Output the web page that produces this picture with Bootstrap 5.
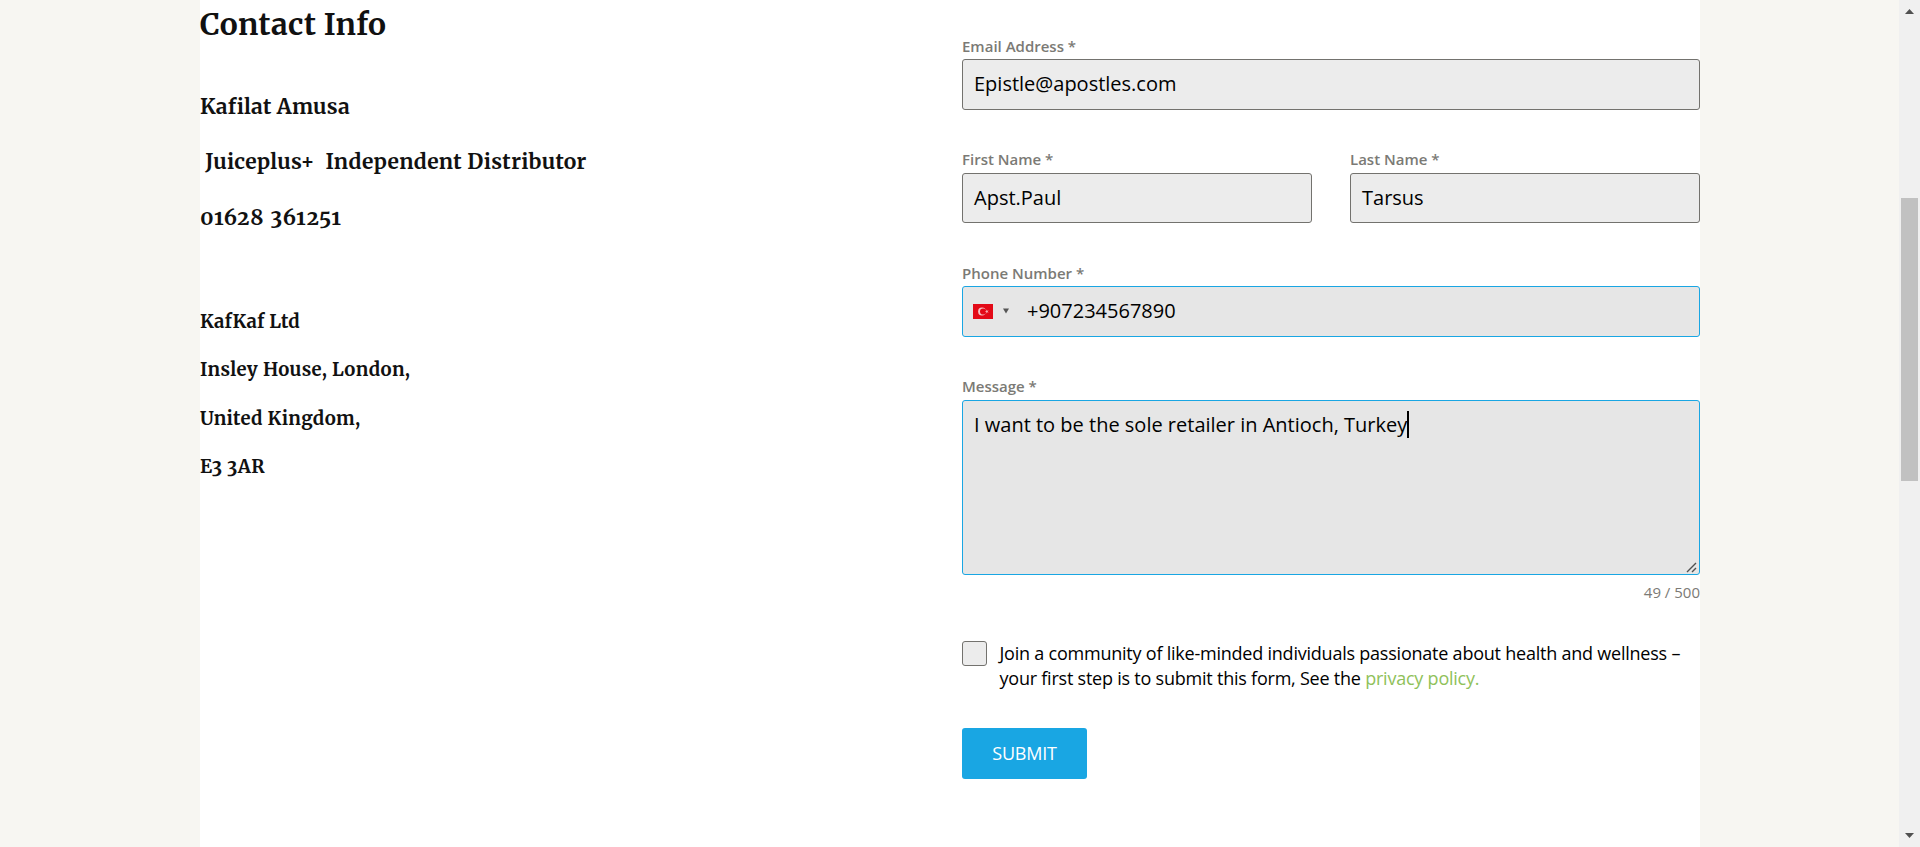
<!DOCTYPE html>
<html lang="en">
<head>
<meta charset="utf-8">
<title>Contact Info</title>
<link href="https://cdn.jsdelivr.net/npm/bootstrap@5.3.0/dist/css/bootstrap.min.css" rel="stylesheet">
<style>
body{background:#f7f6f2;font-family:"Open Sans",sans-serif;color:#000;height:847px;overflow:hidden}
.page{width:1500px;margin-left:200px;background:#fff}
.info{width:762px;font-family:Merriweather,"DejaVu Serif Condensed","DejaVu Serif",serif;font-weight:700;color:#111;white-space:pre;font-variant-numeric:oldstyle-nums}
.info h2,.info h4,.info h5{font-weight:inherit;margin:0}
.info h2{font-size:30px;line-height:48px;letter-spacing:.36px}
.info h4{font-size:21px;line-height:32px;margin-bottom:23px;letter-spacing:.25px}
.info .role{letter-spacing:.34px;margin-bottom:24px}
.info .tel{letter-spacing:.97px}
.info h5{font-size:18.5px;line-height:30px;margin-bottom:18.5px;letter-spacing:.36px}
.info .firm{margin-top:72.5px;letter-spacing:.2px}
.entry{width:738px;padding-top:33px}
.field{margin-bottom:37px}
.field label{display:block;font-size:15px;font-weight:600;line-height:26px;color:#7b7a75}
.field .raised{line-height:24px;padding-bottom:2px}
.field .form-control{height:51px;padding:0 11px;border:1px solid #73726e;border-radius:3px;background:#ececec;font-size:20px;line-height:48px;color:#000}
.field .short{height:50px}
.field .filled{border-color:#19a6e3;background:#e6e6e6}
.field .phone{padding:0 10px 1px}
.field .area{height:175px;position:relative;line-height:27px;padding-top:10px;margin-bottom:0}
.caret{width:2px;height:27px;background:#000}
.grip{position:absolute;right:2px;bottom:1px}
.counter{font-size:15px;line-height:24px;color:#7b7a75;margin-top:5px}
.agree{margin-top:37px;font-size:18px;line-height:25px;gap:12.5px;letter-spacing:-.225px}
.box{width:25px;height:25px;border:1px solid #73726e;border-radius:3px;background:#ececec}
.agree a{color:#8fc15a;text-decoration:none}
.send{margin-top:37px;width:125px;height:51px;border-radius:3px;border:0;background:#19a6e3;color:#fff;font-size:18px;letter-spacing:-.2px;padding:0}
.send:hover{background:#19a6e3;color:#fff}
.track{width:21px;background:#f0f0f0;padding:9px 0}
.thumb{width:17px;height:283px;background:#c1c1c1;margin-top:184px}
</style>
</head>
<body class="d-flex justify-content-between">
<main class="page d-flex">
<section class="info"><h2>Contact Info</h2><h4 style="margin-top:43px">Kafilat Amusa</h4><h4 class="role"> Juiceplus+  Independent Distributor</h4><h4 class="tel">01628 361251</h4><h5 class="firm">KafKaf Ltd</h5><h5>Insley House, London,</h5><h5>United Kingdom,</h5><h5>E3 3AR</h5></section>
<form class="entry">
<div class="field"><label>Email Address *</label><div class="form-control">Epistle@apostles.com</div></div>
<div class="field d-flex justify-content-between">
<div style="width:350px"><label class="raised">First Name *</label><div class="form-control short">Apst.Paul</div></div>
<div style="width:350px"><label class="raised">Last Name *</label><div class="form-control short">Tarsus</div></div>
</div>
<div class="field"><label>Phone Number *</label>
<div class="form-control filled phone d-flex align-items-center">
<svg width="20" height="15" viewBox="0 0 20 15"><rect width="20" height="15" fill="#e30a17"/><circle cx="9" cy="7.5" r="3.9" fill="#f6c3c6"/><circle cx="10.1" cy="7.5" r="3.1" fill="#e30a17"/><path d="M11.8 7.5l1.4-.5.1-1.4.9 1.1 1.4-.4-.8 1.2.8 1.2-1.4-.4-.9 1.1-.1-1.4z" fill="#f4a9ad"/></svg>
<svg class="ms-2" width="10" height="6" viewBox="0 0 10 6"><path d="M2 .5h6L5 5.500z" fill="#555"/></svg>
<span class="ms-3">+907234567890</span></div></div>
<div class="field mb-0"><label class="raised">Message *</label>
<div class="form-control filled area d-flex"><span>I want to be the sole retailer in Antioch, Turkey</span><span class="caret"></span>
<svg class="grip" width="11" height="11" viewBox="0 0 11 11"><path d="M1 10L10 1M6 10l4-4" stroke="#505050" stroke-width="1.4"/></svg></div></div>
<div class="counter text-end">49 / 500</div>
<div class="agree d-flex"><span class="box flex-shrink-0"></span><span class="text-nowrap">Join a community of like-minded individuals passionate about health and wellness –<br>your first step is to submit this form, See the <a href="#">privacy policy.</a></span></div>
<button type="button" class="btn send">SUBMIT</button>
</form>
</main>
<aside class="track d-flex flex-column align-items-center">
<svg width="9" height="5" viewBox="0 0 9 5"><path d="M0 5L4.500 0 9 5z" fill="#505050"/></svg>
<div class="thumb"></div>
<svg class="mt-auto" width="9" height="5" viewBox="0 0 9 5"><path d="M0 0h9L4.500 5z" fill="#505050"/></svg>
</aside>
<script src="https://cdn.jsdelivr.net/npm/bootstrap@5.3.0/dist/js/bootstrap.bundle.min.js"></script>
</body>
</html>
